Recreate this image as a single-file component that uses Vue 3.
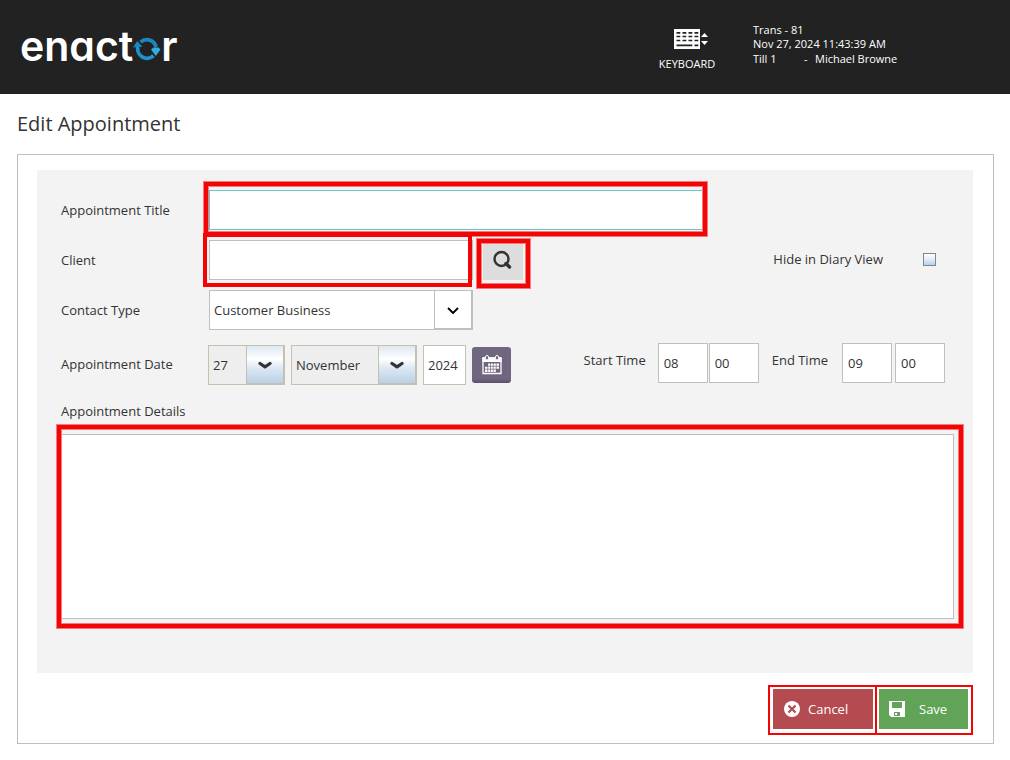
<script setup>
import { ref } from 'vue'

const title = ref('')
const client = ref('')
const hidden = ref(false)
const contact = ref('Customer Business')
const day = ref('27')
const month = ref('November')
const year = ref('2024')
const startHour = ref('08')
const startMinute = ref('00')
const endHour = ref('09')
const endMinute = ref('00')
const details = ref('')

const contactTypes = ['Customer Business', 'Personal']
const days = Array.from({ length: 31 }, (_, i) => String(i + 1).padStart(2, '0'))
const months = ['January', 'February', 'March', 'April', 'May', 'June', 'July', 'August', 'September', 'October', 'November', 'December']
</script>

<template>
  <div class="page">
    <header class="topbar">
      <div class="logo">
        <span>enact</span>
        <svg class="logo-ring" width="28" height="24" viewBox="0 0 28 24" role="img" aria-label="o">
          <path d="M4.900 10A9.300 9.300 0 0 0 20.500 18.600" fill="none" stroke="#1f93cc" stroke-width="3.800" />
          <path d="M7.600 5.200A9.300 9.300 0 0 1 23 10" fill="none" stroke="#1d86bd" stroke-width="3.800" />
          <path d="M0 10.500L4.200 4L9.500 9.800z" fill="#1c86bf" />
          <path d="M18 12.500L20.500 10.500H25.500L27.500 12.500L22.800 19z" fill="#33ace2" />
        </svg>
        <span>r</span>
      </div>
      <button class="keyboard" type="button">
        <svg width="34" height="20" viewBox="0 0 34 20" aria-hidden="true">
          <rect width="26" height="20" fill="#fff" />
          <g stroke="#222" stroke-width="1.700">
            <path d="M2.500 3.800H24.500M2.500 7.500H24.500M2.500 11.500H24.500" stroke-dasharray="3.800 2.200" />
            <path d="M2.500 16.300H18.300M20.500 16.300H24.300" />
          </g>
          <path d="M27 8L30.500 4L34 8zM27 12L30.500 16L34 12z" fill="#fff" />
        </svg>
        <span>KEYBOARD</span>
      </button>
      <div class="session">
        <div>Trans - 81</div>
        <div>Nov 27, 2024 11:43:39 AM</div>
        <div class="till"><span>Till 1</span><span>-</span><span>Michael Browne</span></div>
      </div>
    </header>

    <main>
      <h1>Edit Appointment</h1>
      <form class="panel" @submit.prevent>
        <div class="fields">
          <div class="row">
            <label class="name" for="title">Appointment Title</label>
            <div class="marked soft title-box"><input id="title" v-model="title" type="text" /></div>
          </div>
          <div class="row">
            <label class="name" for="client">Client</label>
            <div class="marked client-box"><input id="client" v-model="client" type="text" /></div>
            <div class="marked soft search-box">
              <button class="search" type="button" aria-label="Search client">
                <svg width="20" height="20" viewBox="0 0 20 20" aria-hidden="true">
                  <circle cx="8.500" cy="9" r="7" fill="none" stroke="#333" stroke-width="2.400" />
                  <path d="M13 13.500L16.500 17" stroke="#333" stroke-width="3.400" stroke-linecap="round" />
                </svg>
              </button>
            </div>
            <div class="hide">
              <label for="hide">Hide in Diary View</label>
              <input id="hide" v-model="hidden" type="checkbox" />
            </div>
          </div>
          <div class="row">
            <label class="name" for="contact">Contact Type</label>
            <div class="pick contact">
              <select id="contact" v-model="contact">
                <option v-for="c in contactTypes" :key="c">{{ c }}</option>
              </select>
              <span class="arrow">
                <svg width="12" height="8" viewBox="0 0 12 8" aria-hidden="true"><path d="M1 2L6 7L11 2" fill="none" stroke="#000" stroke-width="1.900" /></svg>
              </span>
            </div>
          </div>
          <div class="row dates">
            <label class="name" for="day">Appointment Date</label>
            <div class="date-set">
              <div class="pick tinted day">
                <select id="day" v-model="day"><option v-for="d in days" :key="d">{{ d }}</option></select>
                <span class="arrow">
                  <svg width="14" height="8" viewBox="0 0 14 8" aria-hidden="true"><path d="M2 2.500L7 5.800L12 2.500" fill="none" stroke="#333" stroke-width="3.200" stroke-linecap="round" stroke-linejoin="round" /></svg>
                </span>
              </div>
              <div class="pick tinted month">
                <select v-model="month" aria-label="Month"><option v-for="m in months" :key="m">{{ m }}</option></select>
                <span class="arrow">
                  <svg width="14" height="8" viewBox="0 0 14 8" aria-hidden="true"><path d="M2 2.500L7 5.800L12 2.500" fill="none" stroke="#333" stroke-width="3.200" stroke-linecap="round" stroke-linejoin="round" /></svg>
                </span>
              </div>
              <input v-model="year" class="year" type="text" aria-label="Year" />
              <button class="calendar" type="button" aria-label="Open calendar">
                <svg width="20" height="20" viewBox="0 0 20 20" aria-hidden="true">
                  <path d="M1 3H19V18.500H1z" fill="none" stroke="#fff" stroke-width="1.300" />
                  <path d="M.4 2.500H19.600V7H.4z" fill="#fff" />
                  <g fill="#70667f" stroke="#fff"><rect x="3.500" y=".5" width="3" height="4.500" rx="1.500" /><rect x="13.500" y=".5" width="3" height="4.500" rx="1.500" /></g>
                  <path d="M6 8.500H17V14H14V17H3V11.500H6z" fill="#fff" />
                  <path d="M3 11.300H17M3 14.200H17M5.700 8V17M8.500 8V17M11.300 8V17M14.200 8V17" stroke="#70667f" stroke-width=".7" />
                </svg>
              </button>
            </div>
            <div class="times">
              <label class="start-name" for="start">Start Time</label>
              <input id="start" v-model="startHour" type="text" />
              <input v-model="startMinute" class="start-minute" type="text" aria-label="Start minute" />
              <label class="end-name" for="end">End Time</label>
              <input id="end" v-model="endHour" type="text" />
              <input v-model="endMinute" class="end-minute" type="text" aria-label="End minute" />
            </div>
          </div>
          <label class="details-name" for="details">Appointment Details</label>
          <div class="marked soft details-box"><textarea id="details" v-model="details"></textarea></div>
        </div>
        <div class="actions">
          <div class="frame">
            <button class="action cancel" type="button">
              <svg width="16" height="16" viewBox="0 0 16 16" aria-hidden="true">
                <circle cx="8" cy="8" r="8" fill="#fff" />
                <path d="M4.500 4.500L11.500 11.500M11.500 4.500L4.500 11.500" stroke="#b44b50" stroke-width="2.200" />
              </svg>
              <span>Cancel</span>
            </button>
          </div>
          <div class="frame save-frame">
            <button class="action save" type="submit">
              <svg width="16" height="16" viewBox="0 0 16 16" aria-hidden="true">
                <path d="M0 0H16V16H2L0 14z" fill="#fff" />
                <path d="M3 1H13V7H3zM5 11H11V15H5z" fill="#61a357" />
                <path d="M6 12H8V14H6z" fill="#fff" />
              </svg>
              <span>Save</span>
            </button>
          </div>
        </div>
      </form>
    </main>
  </div>
</template>

<style>
body {
  background: #fff;
}
</style>

<style scoped>
.page,
.page button,
.page input,
.page select,
.page textarea {
  font-family: "Open Sans", "Noto Sans", sans-serif;
  font-size: 13px;
  color: #333;
}
.page *,
.page *::after {
  box-sizing: border-box;
}
.page button {
  border: 0;
  padding: 0;
  cursor: pointer;
}
svg {
  display: block;
  flex: none;
}
.page .topbar {
  display: flex;
  height: 94px;
  padding-left: 20px;
  background: #222;
  color: #fff;
}
.logo {
  display: flex;
  align-items: baseline;
  font-family: Inter, sans-serif;
  font-feature-settings: "cv11";
  font-size: 41px;
  font-weight: 600;
  line-height: 48px;
  padding-top: 22px;
}
.topbar .keyboard {
  display: flex;
  flex-direction: column;
  align-items: center;
  gap: 8px;
  align-self: flex-start;
  width: 66px;
  margin-top: 29px;
  margin-left: auto;
  background: none;
  color: #fff;
  font-size: 11px;
  line-height: 14px;
}
.keyboard svg {
  margin-left: 8px;
}
.session {
  width: 257px;
  margin-left: 33px;
  padding-top: 23px;
  font-size: 11px;
  line-height: 14px;
}
.till {
  display: flex;
  padding-top: 1px;
}
.till span:first-child {
  width: 51px;
}
.till span:nth-child(2) {
  width: 11px;
}
main {
  padding: 16px 16px 16px 17px;
}
h1 {
  margin: 0;
  font-size: 20px;
  font-weight: 400;
  line-height: 28px;
}
.panel {
  margin-top: 16px;
  padding: 15px 20px 8px 19px;
  border: 1px solid #bfbfbf;
}
.fields {
  padding: 20px 19px 54px 24px;
  background: #f3f3f3;
}
.row {
  display: flex;
  align-items: center;
  margin-bottom: 10px;
}
.name {
  flex: none;
  width: 148px;
}
input[type="text"],
textarea,
select {
  display: block;
  width: 100%;
  height: 40px;
  margin: 0;
  padding: 0 5px;
  border: 1px solid #bfbfbf;
  border-radius: 0;
  background: #fff;
  outline: none;
}
.marked {
  position: relative;
}
.marked::after {
  content: "";
  position: absolute;
  border: 4px solid #f20505;
  pointer-events: none;
}
.soft::after {
  box-shadow: 0 0 0 1px #f77b7b, inset 0 0 0 1px #f77b7b;
}
.title-box {
  width: 494px;
}
.title-box input[type="text"] {
  border-color: #66c7c9;
}
.title-box::after {
  inset: -8px -4px -6px -5px;
}
.client-box {
  width: 264px;
}
.client-box::after {
  inset: -7px 1px -7px -6px;
}
.search-box {
  margin-left: 10px;
}
.search-box::after {
  inset: -1px -7px -8px -6px;
}
.search {
  display: flex;
  align-items: center;
  justify-content: center;
  width: 40px;
  height: 40px;
  background: #ddd;
}
.hide {
  display: flex;
  align-items: center;
  gap: 40px;
  margin-left: auto;
  padding: 0 18px 2px 0;
}
.hide input {
  appearance: none;
  width: 13px;
  height: 13px;
  margin: 0;
  border: 1px solid #778899;
  background: linear-gradient(#fff, #e3ebf3 50%, #b9cfe4);
}
.pick {
  position: relative;
  flex: none;
}
.pick select {
  appearance: none;
  padding-left: 4px;
}
.arrow {
  position: absolute;
  inset: 0 0 0 auto;
  display: flex;
  align-items: center;
  justify-content: center;
  width: 39px;
  border: 1px solid #bfbfbf;
  border-width: 1px 2px 2px 1px;
  pointer-events: none;
}
.contact {
  width: 264px;
}
.tinted select {
  border-color: #c5c1b0;
  background: #eee;
}
.tinted .arrow {
  border-color: #c5c1b0;
  background: linear-gradient(#dde8f2, #fff 35%, #dbe7f2 60%, #b9d1e8);
}
.dates {
  margin-top: 15px;
  margin-bottom: 17px;
}
.dates .name {
  width: 147px;
  padding-bottom: 2px;
}
.date-set {
  display: flex;
  align-items: center;
  gap: 6px;
}
.day {
  width: 77px;
}
.month {
  width: 126px;
}
.date-set .year {
  width: 43px;
  padding: 0 4px;
  border-color: #c5c1b0;
}
.calendar {
  display: flex;
  align-items: center;
  justify-content: center;
  width: 39px;
  height: 36px;
  border-radius: 3px;
  background: linear-gradient(#70667f 32px, #5b506b);
}
.times {
  display: flex;
  align-items: center;
  margin: -4px 9px 0 auto;
}
.times label {
  margin-bottom: 6px;
}
.times input[type="text"] {
  width: 50px;
}
.start-name {
  margin-right: 12px;
}
.times .start-minute {
  margin: 0 13px 0 1px;
}
.end-name {
  margin-right: 14px;
}
.times .end-minute {
  margin-left: 3px;
}
.details-name {
  display: block;
  line-height: 18px;
}
.details-box {
  margin-top: 14px;
}
.details-box textarea {
  height: 185px;
  padding: 5px;
  resize: none;
}
.details-box::after {
  inset: -9px -9px -9px -4px;
}
.actions {
  display: flex;
  justify-content: flex-end;
  margin-top: 12px;
}
.frame {
  padding: 2px 2px 4px 3px;
  border: 2px solid #f20505;
}
.save-frame {
  margin-left: -2px;
  padding: 2px 3px 4px 2px;
}
.page .action {
  display: flex;
  align-items: center;
  height: 40px;
  color: #fff;
}
.page .cancel {
  width: 100px;
  padding-left: 11px;
  gap: 8px;
  background: #b44b50;
}
.page .save {
  width: 89px;
  padding-left: 10px;
  gap: 14px;
  background: #61a357;
}
</style>
